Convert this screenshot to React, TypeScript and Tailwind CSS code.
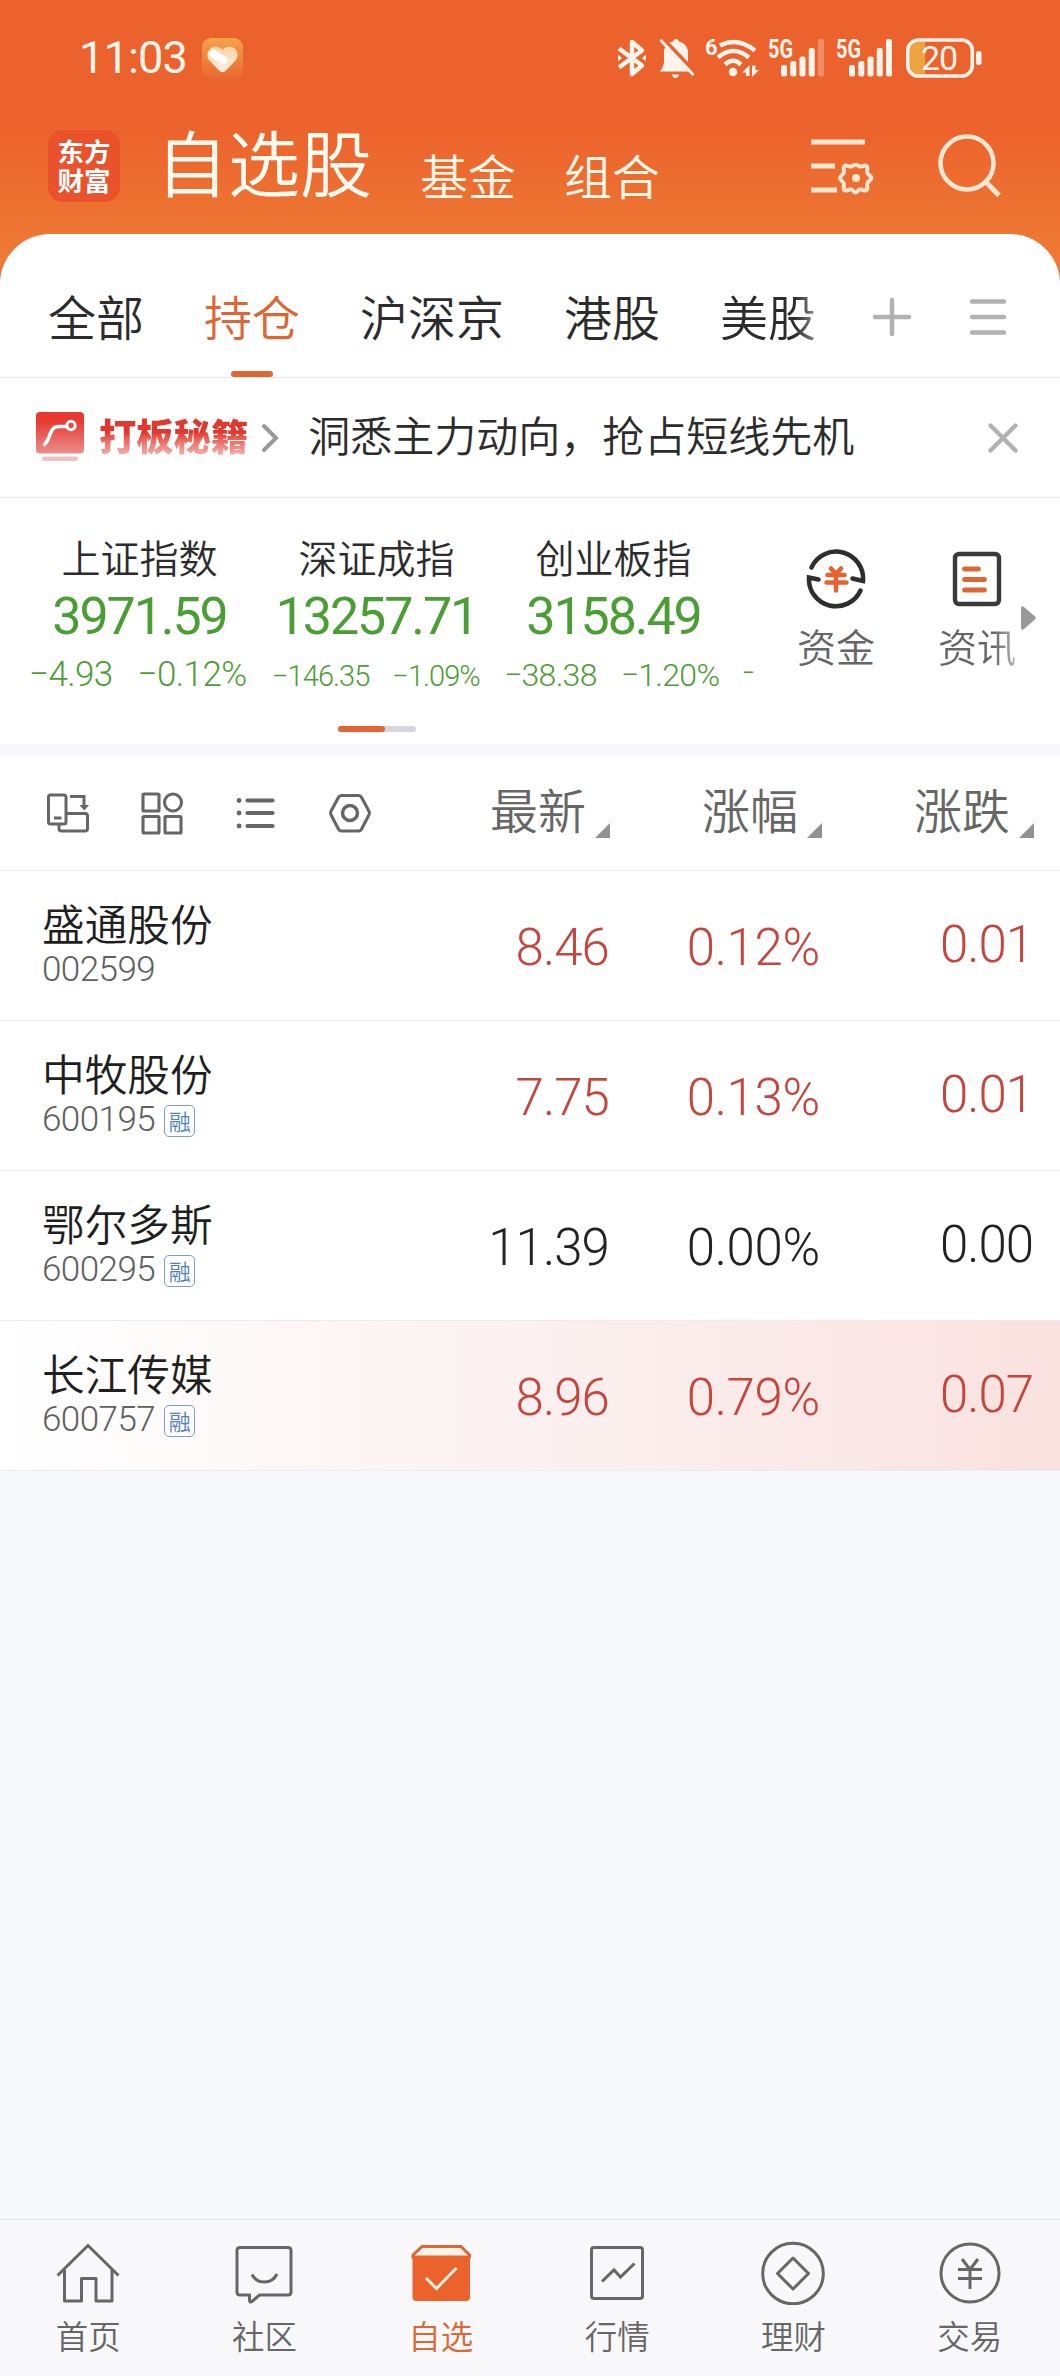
import React, { useState } from 'react';
import clsx from 'clsx';

interface IndexType {
  name: string;
  value: string;
  change: string;
  percent: string;
  changeClass: string;
}

interface StockType {
  name: string;
  code: string;
  margin: boolean;
  price: string;
  percent: string;
  change: string;
  trend: 'up' | 'flat';
  highlight?: boolean;
}

const tabs = ['全部', '持仓', '沪深京', '港股', '美股'];

const indexes: IndexType[] = [
  {
    name: '上证指数',
    value: '3971.59',
    change: '−4.93',
    percent: '−0.12%',
    changeClass: 'mt-[8px] text-[35px] tracking-[-0.6px] gap-[25px] pl-[8px]'
  },
  {
    name: '深证成指',
    value: '13257.71',
    change: '−146.35',
    percent: '−1.09%',
    changeClass: 'mt-[9px] text-[29px] tracking-[-0.95px] gap-[23px] pl-[14px]'
  },
  {
    name: '创业板指',
    value: '3158.49',
    change: '−38.38',
    percent: '−1.20%',
    changeClass: 'mt-[8px] text-[32px] tracking-[-0.7px] gap-[24px] pl-[9px]'
  }
];

const stocks: StockType[] = [
  { name: '盛通股份', code: '002599', margin: false, price: '8.46', percent: '0.12%', change: '0.01', trend: 'up' },
  { name: '中牧股份', code: '600195', margin: true, price: '7.75', percent: '0.13%', change: '0.01', trend: 'up' },
  { name: '鄂尔多斯', code: '600295', margin: true, price: '11.39', percent: '0.00%', change: '0.00', trend: 'flat' },
  { name: '长江传媒', code: '600757', margin: true, price: '8.96', percent: '0.79%', change: '0.07', trend: 'up', highlight: true }
];

const Signal = ({ weak }: { weak?: boolean }) => (
  <svg className="overflow-visible" width="57" height="40" viewBox="0 0 57 40" fill="#fff4ec">
    <text x="0" y="19.5" fontFamily="Roboto" fontWeight="700" fontSize="25" textLength="25" lengthAdjust="spacingAndGlyphs">
      5G
    </text>
    <rect x="13" y="27" width="6" height="11.5" rx="2" />
    <rect x="22.3" y="23" width="6" height="15.5" rx="2" />
    <rect x="31.5" y="18.5" width="6" height="20" rx="2" />
    <rect x="40.7" y="10" width="6" height="28.5" rx="2" />
    <rect x="50" y="1" width="6" height="37.5" rx="2" opacity={weak ? 0.3 : 1} />
  </svg>
);

const StatusBar = () => (
  <div className="flex h-[116px] items-center pl-[79px] pr-[77px]">
    <span className="w-[123px] font-[Roboto] text-[45px] leading-[44px] tracking-[-0.8px] text-[#fff4ec]">11:03</span>
    <svg width="41" height="41" viewBox="0 0 41 41">
      <defs>
        <linearGradient id="heartBg" x1="0" y1="0" x2="0" y2="1">
          <stop offset="0" stopColor="#f4a24b" />
          <stop offset="1" stopColor="#e8682f" />
        </linearGradient>
        <linearGradient id="heart" x1="0" y1="0" x2="0" y2="1">
          <stop offset="0" stopColor="#fbd3a4" />
          <stop offset="1" stopColor="#fff1e4" />
        </linearGradient>
      </defs>
      <rect width="41" height="41" rx="9" fill="url(#heartBg)" />
      <path d="M20.5 12c3-4 9-4 12-1.5 4 3.5 4 8.5 1 12L24 32.5q-3.5 3.5-7 0L7.5 22.5c-3-3.5-3-8.5 1-12 3-2.500 9-2.500 12 1.500z" fill="url(#heart)" />
      <path d="M11 15.500l10.500 6.500" stroke="#fff" strokeWidth="8" strokeLinecap="round" />
    </svg>
    <div className="ml-auto flex items-center">
      {/* bluetooth */}
      <svg width="30" height="40" viewBox="0 0 30 40" fill="none" stroke="#fff4ec" strokeWidth="4.500" strokeLinejoin="round">
        <path d="M2 10.500L25 27.500L15 36V4L25 12.500L2 29.500" />
        <path d="M1 16.500l4 3.500-4 3.500zM29 16.500l-4 3.500 4 3.500z" fill="#fff4ec" stroke="none" />
      </svg>
      {/* bell off */}
      <svg className="ml-[12px]" width="36" height="42" viewBox="0 0 36 42" fill="#fff4ec">
        <path d="M17 2a3 3 0 0 1 3 2.500c6 1.500 9 6 9 11V25q0 3 4 9.500H1Q5 28 5 25V15.500C5 10 8 6 14 4.500A3 3 0 0 1 17 2zM13 37.500h7q-1 3.500-3.500 3.500T13 37.500z" />
        <path d="M3.500 1L37 36.500" stroke="#ec622c" strokeWidth="4" />
        <path d="M1.500 3L34.500 38" stroke="#fff4ec" strokeWidth="3" />
      </svg>
      {/* wifi */}
      <svg className="ml-[11px] overflow-visible" width="54" height="42" viewBox="0 0 54 42" fill="none" stroke="#fff4ec" strokeWidth="4.500">
        <text x="-1" y="18" fill="#fff4ec" stroke="none" fontFamily="Roboto" fontWeight="700" fontSize="22">
          6
        </text>
        <path d="M14 8.500q17-9 35 5" />
        <path d="M12 20.500q15-13 31 0" />
        <path d="M19 27.500q8-7.500 16 0" />
        <circle cx="27" cy="35" r="4.300" fill="#fff4ec" stroke="none" />
        <path d="M36 35.500L43.500 28V39H40V35.500zM53 33L46 40V28.500h3.500V33z" fill="#fff4ec" stroke="none" />
      </svg>
      <div className="ml-[8px] flex gap-[11px]">
        <Signal weak />
        <Signal />
      </div>
      {/* battery */}
      <svg className="ml-[13px]" width="77" height="40" viewBox="0 0 77 40">
        <path d="M11 4h8v32h-8q-7 0-7-8V12q0-8 7-8z" fill="#eda43f" />
        <rect x="1.800" y="2" width="64.500" height="36" rx="10.500" fill="none" stroke="#fff4ec" strokeWidth="3.600" />
        <rect x="70" y="13" width="5.500" height="14" rx="2.500" fill="#fff4ec" />
        <text x="15" y="32" fill="#fff4ec" fontFamily="Roboto" fontSize="34" textLength="37">
          20
        </text>
      </svg>
    </div>
  </div>
);

const Header = () => (
  <div className="flex h-[118px] items-start pl-[48px]">
    <div className="mt-[14px] flex h-[72px] w-[72px] flex-col items-center justify-center rounded-[15px] bg-[#e9522b] pb-[3px] text-[26.5px] leading-[29px] font-bold text-white">
      <span>东方</span>
      <span>财富</span>
    </div>
    <h1 className="ml-[36px] mt-[4px] text-[72px] leading-[80px] font-[350] text-[#fffaf0]">自选股</h1>
    <span className="ml-[48px] mt-[30px] text-[48px] leading-[56px] font-[350] text-[#fff6e8]">基金</span>
    <span className="ml-[48px] mt-[30px] text-[48px] leading-[56px] font-[350] text-[#fff6e8]">组合</span>
    <svg className="ml-[150px] mt-[20px]" width="64" height="64" viewBox="0 0 64 64" fill="none" stroke="#ffe6d3" strokeWidth="4.800">
      <path d="M1 6h54M1 30h24M1 54h26" />
      <path
        d="M61.500 42c0 2-3.500 3-4.300 5.500-.7 2.500 1.300 5-.7 6.500-2.200 1.500-4.500-1-6.500-.7-2 .3-2.700 3.200-4.500 3.200s-2.500-2.900-4.500-3.200c-2-.3-4.300 2.200-6.500.7-2-1.500 0-4-.7-6.500C33 45 30 44 30 42s3-3 3.800-5.500c.7-2.500-1.300-5 .7-6.500 2.200-1.500 4.500 1 7 .5 1.500-2 6.500-2 8 0 2.500.5 4.800-2 7-.5 2 1.500 0 4 .7 6.500.8 2.500 4.300 3.500 4.300 5.500z"
        strokeWidth="4"
      />
      <circle cx="46" cy="42" r="4" fill="#ffe6d3" stroke="none" />
    </svg>
    <svg className="ml-[62px] mt-[16px]" width="66" height="66" viewBox="0 0 66 66" fill="none" stroke="#ffe6d3" strokeWidth="4.600">
      <circle cx="31" cy="31" r="26.500" />
      <path d="M49.500 49.500L63 63.500" strokeWidth="5" />
    </svg>
  </div>
);

const SortHead = ({ label }: { label: string }) => (
  <div className="flex items-end gap-[9px] text-[#666]">
    <span className="text-[48px] leading-[56px] font-[350]">{label}</span>
    <svg width="15" height="15" viewBox="0 0 15 15" className="mb-[-2px]">
      <path d="M15 0V15H0z" fill="#909095" />
    </svg>
  </div>
);

const StockRow = ({ stock }: { stock: StockType }) => (
  <div
    className={clsx(
      'flex h-[150px] border-b border-[#ececec] pl-[42px]',
      stock.highlight ? 'bg-linear-to-r from-white via-[#fbf1f0] to-[#f9e2e0]' : 'bg-white'
    )}
  >
    <div className="w-[298px] pt-[27px]">
      <p className="text-[42.7px] leading-[48px] font-[350] text-[#1f1f1f]">{stock.name}</p>
      <div className="mt-[6px] flex items-center">
        <span className="font-[Roboto] text-[35px] leading-[36px] font-light tracking-[-0.55px] text-[#606060]">{stock.code}</span>
        {stock.margin && (
          <span className="mt-[2px] ml-[9px] flex h-[32px] w-[31px] items-center justify-center rounded-[5px] border border-[#7c9fcb] pb-[2px] text-[22px] leading-[24px] font-[350] text-[#4f80c0]">
            融
          </span>
        )}
      </div>
    </div>
    <div
      className={clsx(
        'flex items-start font-[Roboto] text-[51px] leading-[60px] font-light',
        stock.trend === 'up' ? 'text-[#c8453d]' : 'text-[#222]'
      )}
    >
      <span className="mt-[47px] w-[269px] text-right tracking-[-0.9px]">{stock.price}</span>
      <span className="mt-[47px] w-[211px] text-right tracking-[-0.3px]">{stock.percent}</span>
      <span className="mt-[44px] ml-[120px] tracking-[-1px]">{stock.change}</span>
    </div>
  </div>
);

const navItems = [
  {
    label: '首页',
    icon: (
      <>
        <path d="M1.500 34.500L32 4.500L62.500 34.500" />
        <path d="M8.500 29V60H25.500V37.500H40V60H56V29" strokeLinejoin="round" />
      </>
    )
  },
  {
    label: '社区',
    icon: (
      <>
        <path d="M8 6.500H56q3 0 3 3V51q0 3-3 3H27.500L20 60.500q-2.500 1.500-2.500-1.500V54H8q-3 0-3-3V9.500q0-3 3-3z" />
        <path d="M20 33.500q4 7.500 12.500 7.500T45 33" />
      </>
    )
  },
  {
    label: '自选',
    icon: (
      <>
        <path d="M4 14L13 5.500H52L60.500 14V16H4z" fill="#fff3ea" />
        <path d="M3.500 15H61V56q0 4-4 4H7.500q-4 0-4-4z" fill="#ec622c" stroke="none" />
        <path d="M17 37L27.500 47.500L47.500 27" stroke="#ffefdf" />
      </>
    )
  },
  {
    label: '行情',
    icon: (
      <>
        <rect x="6.500" y="6.500" width="51" height="51" rx="2.500" />
        <path d="M17 40.500L29 29L35.500 36L49.500 22.500" />
      </>
    )
  },
  {
    label: '理财',
    icon: (
      <>
        <circle cx="32" cy="32.500" r="30.300" />
        <path d="M32 17L47.500 32.500L32 48L16.500 32.500z" strokeLinejoin="round" />
      </>
    )
  },
  {
    label: '交易',
    icon: (
      <>
        <circle cx="32" cy="32" r="29" />
        <path d="M24 18L32 28.500L40 18M20 28.500H44M20 37.500H44M32 28.500V48" />
      </>
    )
  }
];

const App = () => {
  const [activeTab, setActiveTab] = useState('持仓');
  const [activeNav, setActiveNav] = useState('自选');

  return (
    <div className="flex h-[2376px] w-[1060px] flex-col overflow-hidden bg-[#f6f8fb] font-['Noto_Sans_CJK_SC',sans-serif]">
      <div className="bg-linear-to-b from-[#ec622c] from-[42%] to-[#ed7934] to-[85%] pb-[60px]">
        <StatusBar />
        <Header />
      </div>

      <div className="-mt-[60px] flex h-[144px] items-center rounded-t-[50px] border-b border-[#e4e4e4] bg-white">
        <div className="flex h-full gap-[60px] pl-[48px]">
          {tabs.map(tab => (
            <button
              key={tab}
              onClick={() => setActiveTab(tab)}
              className={clsx(
                'flex h-full flex-col items-center pt-[53px] text-[48px] leading-[56px] font-[350]',
                tab === activeTab ? 'text-[#dd6633]' : 'text-[#2c2c2c]',
                tab === '美股' && 'bg-linear-to-r from-[#2c2c2c] from-[78%] to-[#8e8e8e] bg-clip-text text-transparent'
              )}
            >
              {tab}
              {tab === activeTab && <span className="mt-auto h-[6px] w-[42px] rounded-full bg-[#dd6633]" />}
            </button>
          ))}
        </div>
        <svg className="mt-[23px] ml-[56px]" width="40" height="40" viewBox="0 0 40 40" stroke="#b2b2b2" strokeWidth="4.500" strokeLinecap="round">
          <path d="M3 20H37M20 3V37" />
        </svg>
        <svg className="mt-[23px] ml-[56px]" width="40" height="40" viewBox="0 0 40 40" stroke="#b2b2b2" strokeWidth="4.500" strokeLinecap="round">
          <path d="M4 4.500H36M4 20H36M4 35.500H36" />
        </svg>
      </div>

      <div className="flex h-[120px] items-center border-b border-[#e4e4e4] bg-white pl-[36px]">
        <svg width="48" height="50" viewBox="0 0 48 50" className="mt-[-1px]">
          <defs>
            <linearGradient id="promo" x1="0" y1="0" x2="0" y2="1">
              <stop offset="0.2" stopColor="#e8382f" />
              <stop offset="1" stopColor="#eb8f8c" />
            </linearGradient>
          </defs>
          <rect width="48" height="41.500" rx="4" fill="url(#promo)" />
          <rect x="6" y="44.500" width="36" height="4.500" rx="2" fill="#f2c0c2" />
          <path d="M8.500 32.500C15 27 13 14 23 14.500H31" fill="none" stroke="#fff" strokeWidth="3.600" strokeLinecap="round" />
          <circle cx="35" cy="13.500" r="4.200" fill="none" stroke="#fff" strokeWidth="3" />
        </svg>
        <span className="-mt-[6px] ml-[15px] bg-linear-to-b from-[#e2372f] from-45% to-[#f3aaa7] to-88% bg-clip-text text-[37.3px] leading-[50px] font-black text-transparent">打板秘籍</span>
        <svg className="ml-[13px]" width="18" height="30" viewBox="0 0 18 30" fill="none" stroke="#999" strokeWidth="4" strokeLinecap="round">
          <path d="M3 3L15 15L3 27" />
        </svg>
        <span className="-mt-[7px] ml-[29px] text-[42px] leading-[50px] font-[350] text-[#2c2c2c]">洞悉主力动向，抢占短线先机</span>
        <svg className="ml-[133px]" width="32" height="32" viewBox="0 0 32 32" stroke="#b2b2b2" strokeWidth="4.300" strokeLinecap="round">
          <path d="M3.500 3.500L28.500 28.500M28.500 3.500L3.500 28.500" />
        </svg>
      </div>

      <div className="flex h-[246px] bg-white">
        <div className="w-[756px] overflow-hidden pl-[21px]">
          <div className="flex">
            {indexes.map(item => (
              <div key={item.name} className="w-[237px] shrink-0 pt-[33px]">
                <p className="text-center text-[39px] leading-[50px] font-[350] text-[#2c2c2c]">{item.name}</p>
                <p className="mt-[6px] text-center font-[Roboto] text-[52px] leading-[60px] tracking-[-2.1px] text-[#4b9e33]">{item.value}</p>
                <p className={clsx('flex h-[40px] items-baseline font-[Roboto] leading-[40px] font-light whitespace-nowrap text-[#4b9e33]', item.changeClass)}>
                  <span>{item.change}</span>
                  <span>{item.percent}</span>
                </p>
              </div>
            ))}
            <span className="mt-[155px] ml-[10px] font-[Roboto] text-[22px] leading-[40px] text-[#4b9e33]">−</span>
          </div>
          <div className="mt-[30px] ml-[317px] h-[6px] w-[78px] rounded-full bg-[#d6d6dc]">
            <div className="h-full w-[47px] rounded-full bg-[#e66432]" />
          </div>
        </div>
        <div className="flex pt-[50px] text-[39px] leading-[50px] font-[350] text-[#666]">
          <div className="flex w-[160px] flex-col items-center">
            <svg width="62" height="62" viewBox="0 0 62 62" fill="none" stroke="#2e2e2e" strokeWidth="4.500" strokeLinecap="round">
              <path d="M6.500 19.500A27 27 0 0 1 58 33L47.500 30.500" />
              <path d="M55.500 42.500A27 27 0 0 1 4 29.500L13.500 31.500" />
              <path d="M26 20.500L31 26L36 20.500M22.500 27H39.500M21.500 34.500H41.500M31 27V42.500" stroke="#e6622f" />
            </svg>
            <span className="mt-[10px]">资金</span>
          </div>
          <div className="ml-[21px] flex w-[80px] flex-col items-center">
            <svg width="62" height="62" viewBox="0 0 62 62" fill="none" strokeLinecap="round">
              <rect x="9" y="6" width="44" height="50" rx="4" stroke="#3a3a3a" strokeWidth="4.400" />
              <path d="M18.500 21H32.500M18.500 31.500H38.500M18.500 42H38.500" stroke="#dd6633" strokeWidth="4.800" />
            </svg>
            <span className="mt-[10px] bg-linear-to-r from-[#666] from-70% to-[#b5b5b5] bg-clip-text text-transparent">资讯</span>
          </div>
          <svg className="mt-[58px] ml-[4px]" width="15" height="24" viewBox="0 0 15 24" fill="#999">
            <path d="M0 2Q0-1 3 1L14 10.500Q15.500 12 14 13.500L3 23Q0 25 0 22z" />
          </svg>
        </div>
      </div>

      <div className="mt-[12px] flex h-[115px] items-center border-b border-[#ececec] bg-white pl-[46px]">
        <div className="flex w-[444px] gap-[50px]">
          <svg width="44" height="44" viewBox="0 0 44 44" fill="none" stroke="#666" strokeWidth="3">
            <rect x="2.500" y="4" width="17.500" height="29" rx="2" />
            <path d="M8 27H15.500" strokeWidth="3" />
            <path d="M20 22.500H39q2.500 0 2.500 2.500V37.500q0 2.500-2.500 2.500H15.500q-2.500 0-2.500-2.500V33" />
            <path d="M24 5.500H38V15" />
            <path d="M33.500 14H43L38.300 19.500z" fill="#666" stroke="none" />
          </svg>
          <svg width="44" height="44" viewBox="0 0 44 44" fill="none" stroke="#666" strokeWidth="3.100">
            <rect x="3" y="3" width="16" height="17" rx="1" />
            <circle cx="33" cy="11.500" r="8.500" />
            <rect x="3" y="25.500" width="16" height="16.500" rx="1" />
            <rect x="25" y="25.500" width="16" height="16.500" rx="1" />
          </svg>
          <svg width="44" height="44" viewBox="0 0 44 44" stroke="#666" strokeWidth="4.200" strokeLinecap="round">
            <path d="M5 9.500h.1M5 22h.1M5 35h.1" strokeWidth="4.800" />
            <path d="M13.500 9.500H38.500M13.500 22H38.500M13.500 35H38.500" />
          </svg>
          <svg width="44" height="44" viewBox="0 0 44 44" fill="none" stroke="#666" strokeWidth="3.100" strokeLinejoin="round">
            <path d="M13.500 4.500H30.500q2 0 3 1.800L41 20.200q1 1.800 0 3.600L33.500 38.200q-1 1.800-3 1.800H13.500q-2 0-3-1.800L3 23.800q-1-1.800 0-3.600L10.500 6.300q1-1.800 3-1.800z" />
            <circle cx="22" cy="22" r="7.500" strokeWidth="3.500" />
          </svg>
        </div>
        <div className="-mt-[11px] flex gap-[92px]">
          <SortHead label="最新" />
          <SortHead label="涨幅" />
          <SortHead label="涨跌" />
        </div>
      </div>

      {stocks.map(stock => (
        <StockRow key={stock.code} stock={stock} />
      ))}

      <div className="mt-auto grid h-[157px] grid-cols-6 border-t border-[#e2e3e6] bg-[#f8f8fb] pr-[2px]">
        {navItems.map(item => (
          <button
            key={item.label}
            onClick={() => setActiveNav(item.label)}
            className={clsx('flex flex-col items-center pt-[21px] text-[32.5px] leading-[40px] font-[350]', item.label === activeNav ? 'text-[#dd6633]' : 'text-[#666]')}
          >
            <svg width="64" height="64" viewBox="0 0 64 64" fill="none" stroke="currentColor" strokeWidth="3">
              {item.icon}
            </svg>
            <span className="mt-[10px]">{item.label}</span>
          </button>
        ))}
      </div>
    </div>
  );
};

export default App;
